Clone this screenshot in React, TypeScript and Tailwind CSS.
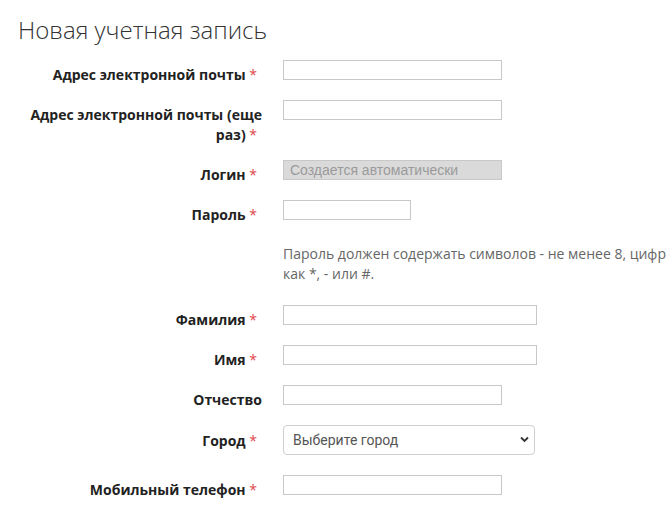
import React from "react";

const Req = () => <span className="mr-[5px] text-[#e0474c] font-normal"> *</span>;

type RowProps = {
  label: React.ReactNode;
  required?: boolean;
  children: React.ReactNode;
  className?: string;
  labelPad?: string;
};

const Row = ({ label, required, children, className = "", labelPad = "pt-[5px]" }: RowProps) => (
  <div className={`flex items-start ${className}`}>
    <label className={`w-[262px] pl-[24px] text-right text-[14px] leading-5 font-bold text-[#222] ${labelPad}`}>
      {label}
      {required && <Req />}
    </label>
    <div className="ml-[21px]">{children}</div>
  </div>
);

const inputCls =
  "block h-5 border border-[#c8c8c8] bg-white px-1 text-[14px] outline-none";

const App = () => {
  return (
    <div className="w-[670px] h-[505px] overflow-hidden bg-white font-['Open_Sans',sans-serif] text-[#222]">
      <h1 className="pl-[18px] pt-[15px] text-[24px] leading-[30px] font-light text-[#333]">
        Новая учетная запись
      </h1>

      <div className="flex flex-col">
        <Row label="Адрес электронной почты" required className="mt-[15px]">
          <input type="text" className={`${inputCls} w-[219px]`} />
        </Row>
        <Row label="Адрес электронной почты (еще раз)" required className="mt-[15px]">
          <input type="text" className={`${inputCls} w-[219px]`} />
        </Row>
        <Row label="Логин" required className="mt-[15px]">
          <input
            type="text"
            disabled
            value="Создается автоматически"
            className="block h-5 w-[219px] border border-[#c8c8c8] bg-[#dadada] px-[6px] text-[14px] leading-4 text-[#9a9a9a] font-['Liberation_Sans',Arial,sans-serif] outline-none"
          />
        </Row>
        <Row label="Пароль" required className="mt-[15px]">
          <input type="password" className={`${inputCls} w-[128px]`} />
        </Row>

        {/* help text */}
        <div className="mt-[19px] pl-[283px] whitespace-nowrap text-[14px] leading-5 text-[#666]">
          Пароль должен содержать символов - не менее 8, цифр - не менее 1, специальных символов, таких
          <br />
          как *, - или #.
        </div>

        <Row label="Фамилия" required className="mt-[21px]">
          <input type="text" className={`${inputCls} w-[254px]`} />
        </Row>
        <Row label="Имя" required className="mt-[15px]">
          <input type="text" className={`${inputCls} w-[254px]`} />
        </Row>
        <Row label="Отчество" className="mt-[15px]">
          <input type="text" className={`${inputCls} w-[219px]`} />
        </Row>
        <Row label="Город" required className="mt-[15px]" labelPad="pt-[6px]">
          <div className="relative w-[252px]">
            <select className="block h-[30px] w-full appearance-none rounded-[4px] border border-[#cfcfcf] bg-white pl-[9px] text-[14px] text-[#555] font-['Roboto',sans-serif] outline-none">
              <option>Выберите город</option>
            </select>
            <svg
              className="pointer-events-none absolute right-[6px] top-[11px]"
              width="9"
              height="7"
              viewBox="0 0 9 7"
            >
              <path d="M1 1.5 L4.5 5 L8 1.5" fill="none" stroke="#333" strokeWidth="1.8" />
            </svg>
          </div>
        </Row>
        <Row label="Мобильный телефон" required className="mt-[20px]">
          <input type="tel" className={`${inputCls} w-[219px]`} />
        </Row>
      </div>
    </div>
  );
};

export default App;
